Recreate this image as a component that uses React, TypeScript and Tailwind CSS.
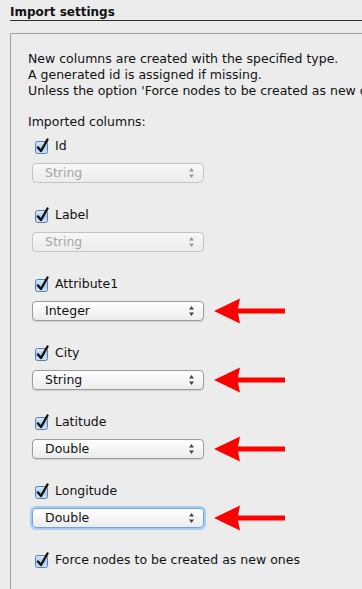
import React from 'react';

type Col = { name: string; type: string; disabled?: boolean; arrow?: boolean; focused?: boolean };

const columns: Col[] = [
  { name: 'Id', type: 'String', disabled: true },
  { name: 'Label', type: 'String', disabled: true },
  { name: 'Attribute1', type: 'Integer', arrow: true },
  { name: 'City', type: 'String', arrow: true },
  { name: 'Latitude', type: 'Double', arrow: true },
  { name: 'Longitude', type: 'Double', arrow: true, focused: true },
];

const CheckBox: React.FC = () => (
  <svg width="16" height="16" viewBox="0 0 16 16" className="shrink-0">
    <defs>
      <linearGradient id="cbg" x1="0" y1="0" x2="0" y2="1">
        <stop offset="0" stopColor="#dcecfb" />
        <stop offset="0.5" stopColor="#a9cdf2" />
        <stop offset="1" stopColor="#cfe5fb" />
      </linearGradient>
    </defs>
    <rect x="1.5" y="3.5" width="12" height="12" rx="2" fill="url(#cbg)" stroke="#5d7fa8" />
    <path d="M4 9.5 L7 13 L13.5 1.5" fill="none" stroke="#111" strokeWidth="2.4" strokeLinecap="round" strokeLinejoin="round" />
  </svg>
);

const Stepper: React.FC<{ disabled?: boolean }> = ({ disabled }) => (
  <svg width="7" height="12" viewBox="0 0 7 12" className="absolute right-[8px] top-[3px]">
    <path d="M3.5 1 L6 4.5 L1 4.5 Z" fill={disabled ? '#9a9a9a' : '#444'} />
    <path d="M3.5 11 L6 7.5 L1 7.5 Z" fill={disabled ? '#9a9a9a' : '#444'} />
  </svg>
);

const Arrow: React.FC = () => (
  <svg width="72" height="26" viewBox="0 0 72 26" className="ml-[10px] shrink-0 -my-[3px]">
    <path d="M0 13 L26 0.5 L24 10.5 L71 10.5 L71 15.5 L24 15.5 L26 25.5 Z" fill="#f00" />
  </svg>
);

const App: React.FC = () => {
  return (
    <div
      className="w-[362px] h-[589px] overflow-hidden bg-[#ececec] pl-[10px] text-[12.5px] text-[#111] whitespace-nowrap"
      style={{ fontFamily: '"DejaVu Sans", "Liberation Sans", sans-serif' }}
    >
      {/* Section title */}
      <div className="pt-[4px] leading-[16px] text-[12px] font-bold border-b border-[#2e2e2e]">Import settings</div>

      {/* Settings panel */}
      <div className="mt-[12px] border-l border-t border-[#a2a2a2] h-[600px] pl-[17px] pt-[17px]">
        <div className="leading-[16px]">
          <p>New columns are created with the specified type.</p>
          <p>A generated id is assigned if missing.</p>
          <p>Unless the option 'Force nodes to be created as new ones' is checked.</p>
        </div>

        <p className="mt-[15px] leading-[16px]">Imported columns:</p>

        <div className="mt-[8px] pl-[6px]">
          {columns.map((c) => (
            <div key={c.name} className="mb-[24px]">
              <div className="flex items-center h-[16px] gap-[5px]">
                <CheckBox />
                <span className="leading-[16px]">{c.name}</span>
              </div>
              <div className="flex items-center h-[20px] mt-[9px] -ml-[2px]">
                <div
                  className={
                    c.focused
                      ? 'relative w-[172px] h-[20px] rounded-[4px] border border-[#6fa6e6] shadow-[0_0_0_2px_#a8cbf2] bg-gradient-to-b from-white to-[#ececec] pl-[12px] leading-[18px]'
                      : c.disabled
                      ? 'relative w-[172px] h-[20px] rounded-[4px] border border-[#c4c4c4] bg-gradient-to-b from-[#f7f7f7] to-[#ececec] pl-[12px] leading-[18px] text-[#a5a5a5]'
                      : 'relative w-[172px] h-[20px] rounded-[4px] border border-[#9c9c9c] bg-gradient-to-b from-white to-[#ececec] pl-[12px] leading-[18px] shadow-[0_1px_1px_rgba(0,0,0,0.12)]'
                  }
                >
                  {c.type}
                  <Stepper disabled={c.disabled} />
                </div>
                {c.arrow && <Arrow />}
              </div>
            </div>
          ))}

          <div className="flex items-center h-[16px] gap-[5px]">
            <CheckBox />
            <span className="leading-[16px]">Force nodes to be created as new ones</span>
          </div>
        </div>
      </div>
    </div>
  );
};

export default App;
